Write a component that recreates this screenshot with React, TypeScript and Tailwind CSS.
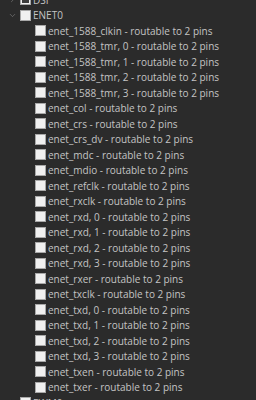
import { ChevronDown, ChevronRight } from 'lucide-react'

const pins = [
  'enet_1588_clkin',
  'enet_1588_tmr, 0',
  'enet_1588_tmr, 1',
  'enet_1588_tmr, 2',
  'enet_1588_tmr, 3',
  'enet_col',
  'enet_crs',
  'enet_crs_dv',
  'enet_mdc',
  'enet_mdio',
  'enet_refclk',
  'enet_rxclk',
  'enet_rxd, 0',
  'enet_rxd, 1',
  'enet_rxd, 2',
  'enet_rxd, 3',
  'enet_rxer',
  'enet_txclk',
  'enet_txd, 0',
  'enet_txd, 1',
  'enet_txd, 2',
  'enet_txd, 3',
  'enet_txen',
  'enet_txer',
]

function Box({ partial }: { partial?: boolean }) {
  return (
    <span className="flex h-[11px] w-[11px] shrink-0 items-center justify-center border border-[#a8a8a8] bg-[#f0f0f0]">
      {partial && <span className="h-[7px] w-[7px] bg-[#3c3c3c]" />}
    </span>
  )
}

function Group({ name, open, partial }: { name: string; open?: boolean; partial?: boolean }) {
  return (
    <div className="flex h-[15.5px] items-center">
      <span className="flex w-[20px] shrink-0 justify-center pl-[5px] text-[#8a8a8a]">
        {open ? <ChevronDown size={9} strokeWidth={1.5} /> : <ChevronRight size={9} strokeWidth={1.5} />}
      </span>
      <Box partial={partial} />
      <span className="ml-[2px] whitespace-nowrap">{name}</span>
    </div>
  )
}

export default function App() {
  return (
    <div className="h-[400px] w-[256px] overflow-hidden bg-[#2b2b2b] font-['Open_Sans',sans-serif] text-[10px] leading-none text-[#c4c4c4]">
      <div className="-mt-[8px]">
        <Group name="DSI" partial />
        <Group name="ENET0" open />
        {pins.map((p) => (
          <div key={p} className="flex h-[15.5px] items-center pl-[35px]">
            <Box />
            <span className="ml-[2px] whitespace-nowrap">{p} - routable to 2 pins</span>
          </div>
        ))}
        <Group name="EWM0" />
      </div>
    </div>
  )
}
